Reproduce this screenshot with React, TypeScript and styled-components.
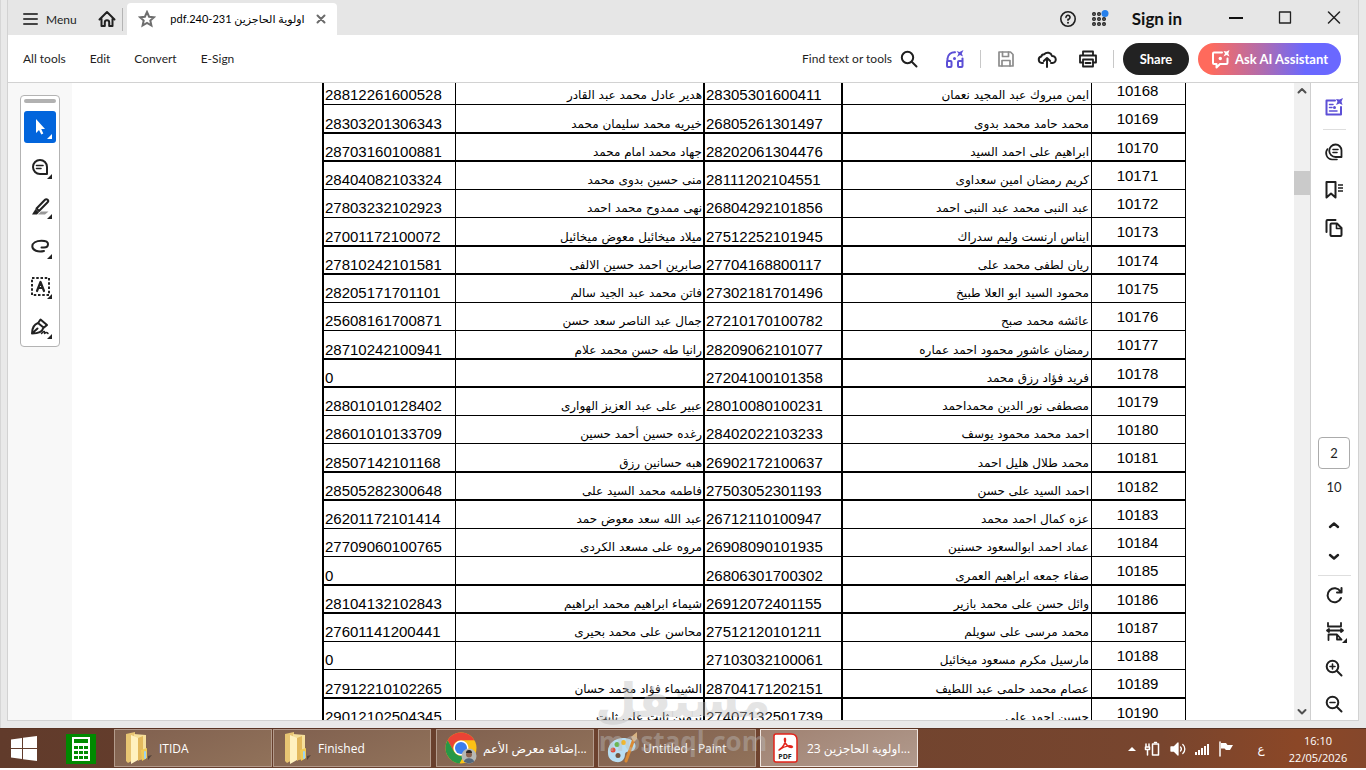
import React from "react";
import styled, { createGlobalStyle } from "styled-components";

const GlobalStyle = createGlobalStyle`
  * { box-sizing: border-box; }
  body { margin: 0; background: #fff; }
  button, input { font: inherit; color: inherit; }
  svg { flex-shrink: 0; }
`;

const UI = `Lato, "DejaVu Sans", sans-serif`;
const WIN = `"Open Sans", "DejaVu Sans", sans-serif`;

const Desktop = styled.div`
  height: 100vh;
  padding-bottom: 2px;
  display: flex;
  flex-direction: column;
  overflow: hidden;
  position: relative;
`;

const WindowFrame = styled.div`
  flex: 1;
  min-height: 0;
  display: flex;
  padding: 0 8px 8px 7px;
  background: #e9e9e9;
  border-left: 1px solid #d6d6d6;
`;

const AppWindow = styled.div`
  flex: 1;
  min-width: 0;
  display: flex;
  flex-direction: column;
  font-family: ${UI};
  color: #1f1f1f;
  box-shadow: 0 0 0 1px #d2d2d2;
`;

const PlainButton = styled.button`
  display: flex;
  align-items: center;
  justify-content: center;
  padding: 0;
  border: 0;
  background: none;
  cursor: pointer;
`;

const TitleBar = styled.header`
  display: flex;
  align-items: stretch;
  height: 35px;
  background: #e6e6e6;
`;

const MenuButton = styled(PlainButton)`
  gap: 8px;
  margin: 3px 21px 0 15px;
  font-size: 12px;
`;

const HomeButton = styled(PlainButton)`
  margin-top: 3px;
`;

const TabDivider = styled.div`
  width: 1px;
  margin: 8px 4px 4px 6px;
  background: #b4b4b4;
`;

const Tab = styled.div`
  display: flex;
  align-items: center;
  width: 210px;
  margin-top: 3px;
  padding: 0 11px;
  gap: 11px;
  border-radius: 4px 4px 0 0;
  background: #fff;
`;

const TabTitle = styled.span`
  flex: 1;
  font-size: 11px;
  color: #000;
  white-space: nowrap;
  text-align: right;
`;

const Spacer = styled.div`
  flex: 1;
`;

const TitleButton = styled(PlainButton)`
  width: 32px;
  margin-top: 2px;
`;

const SignIn = styled(PlainButton)`
  margin: 2px 29px 0 16px;
  font-size: 17px;
  font-weight: 700;
  color: #111;
`;

const CaptionButton = styled(PlainButton)`
  width: 49px;
`;

const Toolbar = styled.nav`
  display: flex;
  align-items: center;
  gap: 9px;
  height: 48px;
  padding: 0 17px 0 15px;
  border-bottom: 1px solid #d2d2d2;
  background: #fff;
  font-size: 12px;
`;

const ToolMenus = styled.div`
  display: flex;
  gap: 24px;
`;

const FindButton = styled(PlainButton)`
  gap: 8px;
  padding-right: 12px;
`;

const IconButton = styled(PlainButton)`
  width: 32px;
  height: 32px;
`;

const ToolDivider = styled.div`
  width: 1px;
  height: 18px;
  background: #c8c8c8;
`;

const Pill = styled.button<{ $ai?: boolean }>`
  display: flex;
  align-items: center;
  justify-content: center;
  gap: 4px;
  width: ${(p) => (p.$ai ? 143 : 66)}px;
  height: 32px;
  padding: 0;
  border: 0;
  border-radius: 16px;
  background: ${(p) =>
    p.$ai ? "linear-gradient(90deg, #ff6a5c 8%, #b06cae 45%, #6a68ff 75%)" : "#222"};
  color: #fff;
  font-size: 13px;
  font-weight: 700;
  cursor: pointer;
`;

const Workspace = styled.div`
  flex: 1;
  min-height: 0;
  display: flex;
  background: #fff;
`;

const ToolColumn = styled.aside`
  width: 64px;
  padding: 12px;
  background: #f8f8f8;
`;

const ToolPalette = styled.div`
  display: flex;
  flex-direction: column;
  gap: 8px;
  padding: 3px;
  border: 1px solid #b3b3b3;
  border-radius: 4px;
  background: #fff;
`;

const PaletteHandle = styled.div`
  height: 4px;
  border-radius: 2px;
  background: #b1b1b1;
`;

const PaletteButton = styled(PlainButton)<{ $active?: boolean }>`
  width: 32px;
  height: 32px;
  border-radius: 3px;
  background: ${(p) => (p.$active ? "#0265dc" : "none")};
  color: ${(p) => (p.$active ? "#fff" : "#222")};
`;

const DocumentView = styled.main`
  flex: 1;
  min-width: 0;
  overflow: hidden;
`;

const Sheet = styled.table`
  table-layout: fixed;
  width: 864px;
  margin: -6px auto 0;
  border-spacing: 0;
  border-left: 2px solid #000;
  font-family: "Liberation Sans", "DejaVu Sans", sans-serif;
  font-size: 15px;
  line-height: 14px;
  color: #000;
`;

const SheetMargin = styled.div`
  padding-left: 142px;
`;

const Row = styled.tr<{ $tall: boolean; $thick: boolean }>`
  td, th {
    height: ${(p) => (p.$tall ? 29 : 28)}px;
    padding: 0 3px ${(p) => (p.$thick ? 1 : 2)}px 1px;
    border-bottom: ${(p) => (p.$thick ? 2 : 1)}px solid #000;
  }
`;

const NumberCell = styled.td<{ $thick?: boolean }>`
  border-right: ${(p) => (p.$thick ? 2 : 1)}px solid #000;
  vertical-align: bottom;
`;

const NameCell = styled.td<{ $thick?: boolean }>`
  border-right: ${(p) => (p.$thick ? 2 : 1)}px solid #000;
  vertical-align: bottom;
  text-align: right;
  white-space: nowrap;
  font-family: "DejaVu Sans", sans-serif;
  font-size: 12px;
`;

const IdCell = styled.th`
  && { padding-top: 7px; }
  border-right: 1px solid #000;
  vertical-align: top;
  text-align: center;
  font-weight: 400;
`;

const ScrollTrack = styled.div`
  width: 16px;
  display: flex;
  flex-direction: column;
  align-items: stretch;
  padding: 4px 0;
  background: #f0f0f0;
`;

const ScrollThumb = styled.div`
  height: 24px;
  margin-top: 76px;
  background: #cacaca;
`;

const Rail = styled.aside`
  width: 48px;
  display: flex;
  flex-direction: column;
  align-items: center;
  justify-content: space-between;
  padding: 8px 1px 0 0;
  border-left: 1px solid #cfcfcf;
  background: #fff;
`;

const RailGroup = styled.div<{ $gap: number }>`
  display: flex;
  flex-direction: column;
  align-items: center;
  gap: ${(p) => p.$gap}px;
`;

const RailDivider = styled.div<{ $wide?: boolean }>`
  width: ${(p) => (p.$wide ? 33 : 23)}px;
  height: 1px;
  background: #dedede;
`;

const PageInput = styled.input`
  width: 32px;
  height: 32px;
  padding: 0;
  border: 1px solid #ababab;
  border-radius: 4px;
  background: #fff;
  text-align: center;
  font-size: 13px;
`;

const PageCount = styled.span`
  padding-bottom: 6px;
  font-size: 13px;
  line-height: 28px;
`;

const StepButton = styled(PlainButton)`
  width: 32px;
  height: 28px;
`;

const Taskbar = styled.footer`
  height: 40px;
  display: flex;
  align-items: stretch;
  border-top: 1px solid #5a3424;
  background: linear-gradient(90deg, #613b2b, #70442f 60%, #78452e 85%, #8b4727 95%, #85472b);
  color: #fff;
  font-family: ${WIN};
  font-size: 12px;
`;

const StartButton = styled(PlainButton)`
  width: 48px;
`;

const CalcButton = styled(PlainButton)`
  width: 66px;
`;

const TaskButton = styled.button<{ $active?: boolean; $after: number }>`
  display: flex;
  align-items: center;
  gap: 6px;
  width: 158px;
  min-width: 0;
  margin: 0 ${(p) => p.$after}px 1px 0;
  padding: 0 8px;
  border: 1px solid ${(p) => (p.$active ? "#f0e6e0" : "#b39b8c")};
  background: ${(p) =>
    p.$active
      ? "linear-gradient(160deg, #a08272, #b19a8d)"
      : "linear-gradient(160deg, #80604f, #91725a)"};
  text-align: left;
  white-space: nowrap;
  cursor: pointer;
`;

const TaskLabel = styled.span<{ $center?: boolean }>`
  flex: 1;
  text-align: ${(p) => (p.$center ? "center" : "left")};
`;

const Tray = styled.div`
  display: flex;
  align-items: center;
  gap: 8px;
  padding-right: 8px;
`;

const Clock = styled.time`
  display: flex;
  flex-direction: column;
  justify-content: center;
  width: 80px;
  text-align: center;
  font-size: 11px;
  line-height: 17px;
`;

const Language = styled(PlainButton)`
  width: 18px;
  margin-left: 10px;
  font-size: 12px;
`;

const Watermark = styled.div`
  position: absolute;
  left: 50%;
  bottom: 16px;
  transform: translateX(-50%);
  display: flex;
  flex-direction: column;
  align-items: center;
  color: rgba(190, 190, 190, 0.42);
  font-family: "DejaVu Sans", sans-serif;
  font-weight: 700;
  pointer-events: none;
`;

const WatermarkArabic = styled.span`
  font-size: 48px;
  line-height: 56px;
`;

const WatermarkLatin = styled.span`
  font-family: "Open Sans", sans-serif;
  font-size: 26px;
  line-height: 26px;
`;

type SvgProps = { w?: number; h?: number; children: React.ReactNode; sw?: number; color?: string };
const Svg = ({ w = 20, h = w, children, sw = 2, color = "currentColor" }: SvgProps) => (
  <svg
    width={w}
    height={h}
    viewBox={`0 0 ${w} ${h}`}
    fill="none"
    stroke={color}
    strokeWidth={sw}
    strokeLinecap="round"
    strokeLinejoin="round"
    aria-hidden="true"
  >
    {children}
  </svg>
);

const PaletteIcon = ({ children }: { children: React.ReactNode }) => (
  <Svg w={32} sw={2}>
    {children}
    <path d="M28 23V28H23Z" fill="currentColor" stroke="none" />
  </Svg>
);

const Folder = () => (
  <Svg w={30} h={34} sw={1} color="none">
    <path d="M3 3 12 1V28L5 32 3 30Z" fill="#e8c573" />
    <path d="M11 3 23 4V28L12 29Z" fill="#f6df9b" />
    <path d="M8 4 15 7V29L8 33Z" fill="#fff1bf" />
    <path d="M15 7 20 5V27L15 30Z" fill="#e3b95d" />
    <path d="M18 19 24 17V27L19 30Z" fill="#efcb56" />
    <path d="M22 21v6" stroke="#9ed5f0" strokeWidth="2" />
    <path d="M25 25l4-1-4 5z" fill="#54443b" />
  </Svg>
);

type Person = [id: number, name: string, national: string, spouse: string, spouseNational: string];

const PEOPLE: Person[] = [
  [10168, "ايمن مبروك عبد المجيد نعمان", "28305301600411", "هدير عادل محمد عبد القادر", "28812261600528"],
  [10169, "محمد حامد محمد بدوى", "26805261301497", "خيريه محمد سليمان محمد", "28303201306343"],
  [10170, "ابراهيم على احمد السيد", "28202061304476", "جهاد محمد امام محمد", "28703160100881"],
  [10171, "كريم رمضان امين سعداوى", "28111202104551", "منى حسين بدوى محمد", "28404082103324"],
  [10172, "عبد النبى محمد عبد النبى احمد", "26804292101856", "نهى ممدوح محمد احمد", "27803232102923"],
  [10173, "ايناس ارنست وليم سدراك", "27512252101945", "ميلاد ميخائيل معوض ميخائيل", "27001172100072"],
  [10174, "ريان لطفى محمد على", "27704168800117", "صابرين احمد حسين الالفى", "27810242101581"],
  [10175, "محمود السيد ابو العلا طبيخ", "27302181701496", "فاتن محمد عبد الجيد سالم", "28205171701101"],
  [10176, "عائشه محمد صبح", "27210170100782", "جمال عبد الناصر سعد حسن", "25608161700871"],
  [10177, "رمضان عاشور محمود احمد عماره", "28209062101077", "رانيا طه حسن محمد علام", "28710242100941"],
  [10178, "فريد فؤاد رزق محمد", "27204100101358", "", "0"],
  [10179, "مصطفى نور الدين محمداحمد", "28010080100231", "عبير على عبد العزيز الهوارى", "28801010128402"],
  [10180, "احمد محمد محمود يوسف", "28402022103233", "رغده حسين أحمد حسين", "28601010133709"],
  [10181, "محمد طلال هليل احمد", "26902172100637", "هبه حسانين رزق", "28507142101168"],
  [10182, "احمد السيد على حسن", "27503052301193", "فاطمه محمد السيد على", "28505282300648"],
  [10183, "عزه كمال احمد محمد", "26712110100947", "عبد الله سعد معوض حمد", "26201172101414"],
  [10184, "عماد احمد ابوالسعود حسنين", "26908090101935", "مروه على مسعد الكردى", "27709060100765"],
  [10185, "صفاء جمعه ابراهيم العمرى", "26806301700302", "", "0"],
  [10186, "وائل حسن على محمد بازير", "26912072401155", "شيماء ابراهيم محمد ابراهيم", "28104132102843"],
  [10187, "محمد مرسى على سويلم", "27512120101211", "محاسن على محمد بحيرى", "27601141200441"],
  [10188, "مارسيل مكرم مسعود ميخائيل", "27103032100061", "", "0"],
  [10189, "عصام محمد حلمى عبد اللطيف", "28704171202151", "الشيماء فؤاد محمد حسان", "27912210102265"],
  [10190, "حسين احمد على", "27407132501739", "نرمين ثابت على ثابت", "29012102504345"],
];

const TitleRow = () => (
  <TitleBar>
    <MenuButton>
      <Svg w={15} h={12} color="#444"><path d="M1 1H14M1 6H14M1 11H14" /></Svg>
      Menu
    </MenuButton>
    <HomeButton aria-label="Home">
      <Svg w={18} h={18} color="#222">
        <path d="M1.500 9.500 9 2 16.500 9.500M3.500 8.500V16H6.800V12.500A2.200 2.200 0 0 1 11.200 12.500V16H14.500V8.500" />
      </Svg>
    </HomeButton>
    <TabDivider />
    <Tab>
      <Svg w={18} h={18} color="#6e6e6e">
        <path d="M9 2 11.100 6.700 16 7.200 12.300 10.500 13.400 15.500 9 13 4.600 15.500 5.700 10.500 2 7.200 6.900 6.700Z" strokeLinejoin="miter" />
      </Svg>
      <TabTitle dir="rtl">اولوية الحاجزين 231-240.pdf</TabTitle>
      <PlainButton aria-label="Close tab">
        <Svg w={10} h={10} color="#6b6b6b"><path d="M1.500 1.500 8.500 8.500M8.500 1.500 1.500 8.500" /></Svg>
      </PlainButton>
    </Tab>
    <Spacer />
    <TitleButton aria-label="Help">
      <Svg w={18} h={18} sw={1.600}>
        <circle cx="9" cy="9" r="7.200" />
        <path d="M7 7.400A2 2 0 1 1 9 9.300V10.200" />
        <circle cx="9" cy="12.800" r="1" fill="currentColor" stroke="none" />
      </Svg>
    </TitleButton>
    <TitleButton aria-label="Apps">
      <Svg w={18} h={18} sw={1.400}>
        {[3, 8, 13].map((y) => [3, 8, 13].map((x) => <circle key={`${x}-${y}`} cx={x} cy={y + 1} r="1.300" />))}
        <circle cx="14" cy="3.500" r="3.500" fill="#2680eb" stroke="none" />
      </Svg>
    </TitleButton>
    <SignIn>Sign in</SignIn>
    <CaptionButton aria-label="Minimize">
      <Svg w={14} h={14} color="#111"><path d="M0 7H14" strokeLinecap="butt" /></Svg>
    </CaptionButton>
    <CaptionButton aria-label="Maximize">
      <Svg w={14} h={14} sw={1.300} color="#222"><rect x="1.500" y="1" width="11" height="11" /></Svg>
    </CaptionButton>
    <CaptionButton aria-label="Close">
      <Svg w={14} h={14} sw={1.500} color="#222"><path d="M1.500 1 12.500 12M12.500 1 1.500 12" /></Svg>
    </CaptionButton>
  </TitleBar>
);

const ToolbarRow = () => (
  <Toolbar>
    <ToolMenus>
      {["All tools", "Edit", "Convert", "E-Sign"].map((t) => <PlainButton key={t}>{t}</PlainButton>)}
    </ToolMenus>
    <Spacer />
    <FindButton>
      Find text or tools
      <Svg w={18} h={18}><circle cx="7.500" cy="7.500" r="5.700" /><path d="M12 12 16.500 16.500" /></Svg>
    </FindButton>
    <IconButton aria-label="Listen">
      <Svg w={20} h={20} color="#5c4fd6">
        <path d="M2.500 12V9.500A7 7 0 0 1 10 3.200" />
        <path d="M17.500 12V9.500" />
        <rect x="2" y="12" width="4.500" height="6" rx="1" />
        <rect x="13" y="12" width="4.500" height="6" rx="1" />
        <path d="M18.500 1 14.500 3 11.500 2 13.500 4.500 12 8 15 6 18 7.500 16.800 4.500Z" fill="#5c4fd6" strokeWidth="0" />
        <circle cx="9.500" cy="9.500" r="1.500" fill="#5c4fd6" stroke="none" />
      </Svg>
    </IconButton>
    <ToolDivider />
    <IconButton aria-label="Save">
      <Svg w={18} h={18} color="#8c8c8c" sw={1.700}>
        <path d="M2 2H13.500L16 4.500V16H2Z" />
        <path d="M5.500 2V6.500H11.500V2M5 16V10.500H13V16" />
      </Svg>
    </IconButton>
    <IconButton aria-label="Upload">
      <Svg w={20} h={20}>
        <path d="M6 14H4.800A3.300 3.300 0 0 1 4.300 7.500 2.900 2.900 0 0 1 7.200 5.200 4.600 4.600 0 0 1 15 7 3.500 3.500 0 0 1 15.500 14H14M10 18V9.500M6.800 12 10 9 13.200 12" />
      </Svg>
    </IconButton>
    <IconButton aria-label="Print">
      <Svg w={20} h={20} sw={1.800}>
        <path d="M5 6V2.500H15V6M5 13.500H2V6.500H18V13.500H15" />
        <rect x="5" y="10.500" width="10" height="7" />
        <path d="M7.500 14H12.500" />
      </Svg>
    </IconButton>
    <ToolDivider />
    <Pill>Share</Pill>
    <Pill $ai>
      <Svg w={20} h={20}>
        <path d="M11 3.500H3Q2 3.500 2 4.500V14Q2 15 3 15H5.500V18.500L9 15H15.500Q16.500 15 16.500 14V9.500" />
        <path d="M18.500 1 15.500 2.500 12.500 2 14 4.500 12.500 7.500 15.500 6 18.500 7.500 17.300 4.500Z" fill="#fff" stroke="none" />
        <circle cx="9.300" cy="9.500" r="1.700" fill="#fff" stroke="none" />
      </Svg>
      Ask AI Assistant
    </Pill>
  </Toolbar>
);

const Palette = () => (
  <ToolColumn>
    <ToolPalette>
      <PaletteHandle />
      <PaletteButton $active aria-label="Select">
        <PaletteIcon><path d="M12 8V22L15 19 17.300 23.500 19.300 22.500 17.200 18H21Z" fill="#fff" stroke="none" /></PaletteIcon>
      </PaletteButton>
      <PaletteButton aria-label="Comment">
        <PaletteIcon>
          <path d="M16 9A7 7 0 1 0 16 23H23V16A7 7 0 0 0 16 9Z" />
          <path d="M12.500 14.500H19M12.500 17.500H17" strokeWidth="1.600" />
        </PaletteIcon>
      </PaletteButton>
      <PaletteButton aria-label="Highlight">
        <PaletteIcon>
          <path d="M17 20.500H24.500L21 23.500H14Z" fill="#999" stroke="none" />
          <path d="M12.500 17.500 21 8.700A1.800 1.800 0 0 1 23.600 11.300L15 20Z" />
          <path d="M11.500 18 15 21.500 13 23.500H8Z" fill="currentColor" stroke="none" />
        </PaletteIcon>
      </PaletteButton>
      <PaletteButton aria-label="Draw">
        <PaletteIcon>
          <path d="M17.500 16.500H20C22.500 16.500 24 15 24 13C24 10.500 20.500 9.700 17.500 9.700C12 9.700 8.300 12 8.300 15.300C8.300 19.500 14 21.500 20 20" />
        </PaletteIcon>
      </PaletteButton>
      <PaletteButton aria-label="Edit text">
        <PaletteIcon>
          <rect x="8" y="7" width="17" height="17" strokeDasharray="2.500 1.750" strokeLinecap="butt" />
          <path d="M13 20 16.500 11 20 20M14.200 17H18.800" strokeWidth="2.200" />
        </PaletteIcon>
      </PaletteButton>
      <PaletteButton aria-label="Sign">
        <PaletteIcon>
          <path d="M8 22.500C8 17 10 13.500 14 12L19.500 16.500C18.500 20.500 14 22.500 8 22.500ZM14.500 11.500 16.500 8.500 23 14 20 16.500M8.500 22 13.500 17.500" />
          <path d="M17.500 22.500C20 19.500 21 20 20.500 22.500C22 21 23 21 24 22.500" strokeWidth="1.500" />
        </PaletteIcon>
      </PaletteButton>
    </ToolPalette>
  </ToolColumn>
);

const SideRail = () => (
  <Rail>
    <RailGroup $gap={6}>
      <IconButton aria-label="AI panel">
        <Svg w={20} h={20} color="#5c4fd6">
          <path d="M11 3.500H2.500V17.500H17V10" />
          <path d="M5.500 7.500H9M5.500 10.500H8M5.500 14H13" strokeWidth="1.500" />
          <path d="M19 1 15.500 2.500 12 2 13.500 4.800 12 8 15.500 6.500 18.500 8 17.500 4.500Z" fill="#5c4fd6" stroke="none" />
          <circle cx="10.500" cy="10.500" r="1.500" fill="#5c4fd6" stroke="none" />
        </Svg>
      </IconButton>
      <RailDivider />
      <IconButton aria-label="Comments">
        <Svg w={20} h={20} sw={1.800}>
          <path d="M11.500 2.500A6 6 0 1 0 11.500 15H17.500V8.500A6 6 0 0 0 11.500 2.500Z" />
          <path d="M3.500 7A6.500 6.500 0 0 0 8 17.500H13M9 7.500H14M9 10.500H13" strokeWidth="1.600" />
        </Svg>
      </IconButton>
      <IconButton aria-label="Bookmarks">
        <Svg w={20} h={20}>
          <path d="M2.500 2H11.500V17.500L7 13.500 2.500 17.500Z" />
          <path d="M14 5H19M14 8H19M14 11H19" strokeWidth="1.500" strokeLinecap="butt" />
        </Svg>
      </IconButton>
      <IconButton aria-label="Pages">
        <Svg w={20} h={20} sw={2}>
          <path d="M7.500 5.500H13L17.500 10V17Q17.500 18 16.500 18H7.500Q6.500 18 6.500 17V6.500Q6.500 5.500 7.500 5.500Z" />
          <path d="M12.500 6V10.500H17" strokeWidth="1.600" />
          <path d="M2.500 14V3Q2.500 2 3.500 2H11.500" />
        </Svg>
      </IconButton>
    </RailGroup>
    <RailGroup $gap={4}>
      <PageInput aria-label="Page" defaultValue="2" />
      <PageCount>10</PageCount>
      <StepButton aria-label="Previous page"><Svg w={12} h={8}><path d="M2 6 6 2.500 10 6" strokeWidth="2.400" /></Svg></StepButton>
      <StepButton aria-label="Next page"><Svg w={12} h={8}><path d="M2 2 6 5.500 10 2" strokeWidth="2.400" /></Svg></StepButton>
      <RailDivider $wide />
      <IconButton aria-label="Rotate">
        <Svg w={20} h={20}><path d="M16.500 5.500A7 7 0 1 0 17 12M17.500 2V6.500H13" /></Svg>
      </IconButton>
      <IconButton aria-label="Fit width">
        <Svg w={32} h={32} sw={1.800}>
          <path d="M10 7V10.500H23V7M9 14.500H25M11 13 9 14.500 11 16M23 13 25 14.500 23 16M10.500 24V18.500H19L23.500 23.500H19V19" />
          <path d="M29 22V27H24Z" fill="currentColor" stroke="none" />
        </Svg>
      </IconButton>
      <IconButton aria-label="Zoom in">
        <Svg w={18} h={18}><circle cx="7.500" cy="7.500" r="5.800" /><path d="M12 12 16.500 16.500" /><path d="M5 7.500H10M7.500 5V10" strokeWidth="1.600" /></Svg>
      </IconButton>
      <IconButton aria-label="Zoom out">
        <Svg w={18} h={18}><circle cx="7.500" cy="7.500" r="5.800" /><path d="M12 12 16.500 16.500" /><path d="M5 7.500H10" strokeWidth="1.600" /></Svg>
      </IconButton>
    </RailGroup>
  </Rail>
);

const NameTable = () => (
  <SheetMargin>
    <Sheet>
      <colgroup>
        <col width="132" /><col width="249" /><col width="138" />
        <col width="249" /><col width="94" />
      </colgroup>
      <tbody>
        {PEOPLE.map(([id, name, national, spouse, spouseNational], i) => (
          <Row key={id} $tall={i % 4 === 1} $thick={i % 4 === 1 || i % 4 === 2}>
            <NumberCell>{spouseNational}</NumberCell>
            <NameCell $thick dir="rtl">{spouse}</NameCell>
            <NumberCell $thick>{national}</NumberCell>
            <NameCell dir="rtl">{name}</NameCell>
            <IdCell scope="row">{id}</IdCell>
          </Row>
        ))}
      </tbody>
    </Sheet>
  </SheetMargin>
);

const BottomBar = () => (
  <Taskbar>
    <StartButton aria-label="Start">
      <Svg w={28} h={28} color="none">
        <path d="M1 4.500 12 3V13H1ZM13 2.800 27 1V13H13ZM1 14H12V24L1 22.500ZM13 14H27V26L13 24.200Z" fill="#fff" />
      </Svg>
    </StartButton>
    <CalcButton aria-label="Calculator">
      <Svg w={30} h={30} color="none">
        <rect width="30" height="30" fill="#008a00" />
        <rect x="6" y="3" width="18" height="24" fill="#fff" />
        <rect x="8" y="5" width="14" height="4" fill="#008a00" />
        {[12, 17, 22].map((y) => [8, 13, 18].map((x) => (
          <rect key={`${x}-${y}`} x={x} y={y} width="4" height="3" fill="#008a00" />
        )))}
      </Svg>
    </CalcButton>
    <TaskButton $after={1}><Folder /><TaskLabel>ITIDA</TaskLabel></TaskButton>
    <TaskButton $after={5}><Folder /><TaskLabel>Finished</TaskLabel></TaskButton>
    <TaskButton $after={4}>
      <Svg w={32} h={32} color="none">
        <circle cx="16" cy="16" r="15.500" fill="#fbc116" />
        <path d="M2.600 8.200A15.500 15.500 0 0 1 29.400 8.200H16A8 8 0 0 0 9 20Z" fill="#ea4335" />
        <path d="M2.600 8.200 9.200 20A8 8 0 0 0 19 23.200L14.500 31.500A15.500 15.500 0 0 1 2.600 8.200Z" fill="#279847" />
        <circle cx="16" cy="16" r="7.500" fill="#fff" />
        <circle cx="16" cy="16" r="6" fill="#3b7ded" />
        <circle cx="24" cy="24" r="7.500" fill="#b6b8b5" />
        <path d="M19 30C19 25 29 25 29 30L24 31.500Z" fill="#53677c" />
        <circle cx="24" cy="22.500" r="3" fill="#8c6350" />
        <path d="M21 21A3 3 0 0 1 27 21Z" fill="#2b2523" />
      </Svg>
      <TaskLabel $center>إضافة معرض الأعم...</TaskLabel>
    </TaskButton>
    <TaskButton $after={4}>
      <Svg w={30} h={32} color="none">
        <path d="M1 21C0 11 9 5 18 6C27 7 31 13 27 18C25 21 19 18 18 22C18 27 15 31 9 30C4 29 1 26 1 21Z" fill="#b9def2" />
        <circle cx="6" cy="18" r="2.500" fill="#e24a3b" />
        <circle cx="10" cy="12.500" r="2.500" fill="#6db650" />
        <circle cx="16.500" cy="10.500" r="2.500" fill="#f2b72f" />
        <circle cx="11" cy="23.500" r="2.500" fill="#73543f" />
        <path d="M28 4 19 29" stroke="#d98a35" strokeWidth="3" />
        <path d="M24 5 30 0 30 7 27 10Z" fill="#d9b382" />
      </Svg>
      <TaskLabel>Untitled - Paint</TaskLabel>
    </TaskButton>
    <TaskButton $after={0} $active>
      <Svg w={32} h={32} color="none">
        <path d="M7 2H22Q28 2 28 8V28Q28 30 26 30H7Q5 30 5 28V4Q5 2 7 2Z" fill="#fff" stroke="#e2231a" strokeWidth="1.500" />
        <path d="M10 18C14 16 17 10 16.500 7C15.500 5 14.500 8 17 12C19 15 22 16 23.500 15C23 13 17 13 10 18Z" stroke="#e2231a" strokeWidth="1.500" />
        <text x="16" y="27" textAnchor="middle" fontFamily="Open Sans" fontSize="7" fontWeight="700" fill="#222">PDF</text>
      </Svg>
      <TaskLabel $center>اولوية الحاجزين 23...</TaskLabel>
    </TaskButton>
    <Spacer />
    <Tray>
      <Svg w={8} h={16} color="none"><path d="M0 10 4 6 8 10Z" fill="#fff" /></Svg>
      <Svg w={18} h={18} color="#fff" sw={1.500}>
        <rect x="8.500" y="4" width="6" height="11" /><path d="M10.500 2.500H12.500M2 4V6.500M5 4V6.500M1.500 7H5.500V9.500H1.500ZM3.500 10V15" />
      </Svg>
      <Svg w={16} h={16} color="#fff" sw={1.300}>
        <path d="M1 6H4L8 2V14L4 10H1Z" fill="#fff" /><path d="M10.500 6A3 3 0 0 1 10.500 10M12.800 3.500A6 6 0 0 1 12.800 12.500" />
      </Svg>
      <Svg w={16} h={16} color="none">
        {[0, 1, 2, 3, 4].map((n) => <rect key={n} x={n * 3 + 1} y={11 - n * 2} width="2" height={3 + n * 2} fill="#fff" />)}
      </Svg>
      <Svg w={16} h={16} color="#fff" sw={1.500}>
        <path d="M2 1V15" /><path d="M3 2H8L9.500 4H15L12 9H8L6.500 7.500H3Z" fill="#fff" stroke="none" />
      </Svg>
      <Language>ع</Language>
      <Clock><span>16:10</span><span>22/05/2026</span></Clock>
    </Tray>
  </Taskbar>
);

export default function App() {
  return (
    <Desktop>
      <GlobalStyle />
      <WindowFrame>
        <AppWindow>
          <TitleRow />
          <ToolbarRow />
          <Workspace>
            <Palette />
            <DocumentView><NameTable /></DocumentView>
            <ScrollTrack>
              <Svg w={16} h={8} color="#505050"><path d="M4.500 5.500 8 2 11.500 5.500" /></Svg>
              <ScrollThumb />
              <Spacer />
              <Svg w={16} h={8} color="#505050"><path d="M4.500 2 8 5.500 11.500 2" /></Svg>
            </ScrollTrack>
            <SideRail />
          </Workspace>
        </AppWindow>
      </WindowFrame>
      <BottomBar />
      <Watermark>
        <WatermarkArabic>مستقل</WatermarkArabic>
        <WatermarkLatin>mostaql.com</WatermarkLatin>
      </Watermark>
    </Desktop>
  );
}
